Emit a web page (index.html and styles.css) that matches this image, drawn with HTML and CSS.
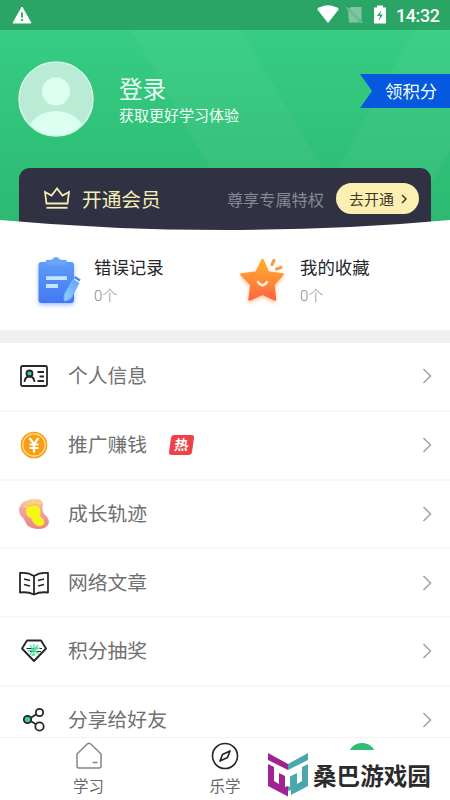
FILE: index.html
```html
<!DOCTYPE html>
<html lang="zh-CN">
<head>
<meta charset="utf-8">
<title>我的</title>
<link rel="stylesheet" href="styles.css">
</head>
<body>
<div class="screen">
  <header class="hero">
    <svg class="hero-bg" width="450" height="231" viewBox="0 0 450 231">
      <defs>
        <linearGradient id="hg" x1="0" y1="0" x2="0" y2="1"><stop offset="0" stop-color="#37d086"/><stop offset="1" stop-color="#2db870"/></linearGradient>
      </defs>
      <rect width="450" height="231" fill="url(#hg)"/>
      <path d="M131 30H241L328 178L340 165L414 30H450V150L425 195H226Z" fill="#fff" fill-opacity=".04"/>
    </svg>
    <div class="status">
      <svg width="20" height="18" viewBox="0 0 20 18"><path d="M10 1L19 17H1Z" fill="#fff" stroke="#fff" stroke-linejoin="round"/><path d="M10 6.5V11.5M10 13V15" stroke="#2ba565" stroke-width="1.9"/></svg>
      <div class="status-right">
        <svg width="70" height="20" viewBox="0 0 70 20">
          <path d="M0 4Q11-3.5 22 4L11 18Z" fill="#fff"/>
          <path d="M34 2H44.5V16L32 3.5ZM31 5L43 17.5H32Z" fill="#80c5a1"/><path d="M29.5 2.500L45 18" stroke="#80c5a1" stroke-width="1.3"/>
          <path d="M57 2.500H60V.5H66V2.500H69V18.500H57Z" fill="#fff"/><path d="M64.500 5L60 11H63L61.500 16L66 9.500H63Z" fill="#2ba565"/>
        </svg>
        <span class="clock">14:32</span>
      </div>
    </div>
    <div class="profile">
      <svg class="avatar" width="76" height="76" viewBox="0 0 76 76">
        <defs><clipPath id="av"><circle cx="38" cy="38" r="37"/></clipPath></defs>
        <circle cx="38" cy="38" r="37" fill="#baebd5"/>
        <g clip-path="url(#av)" fill="#dbfff0"><circle cx="38" cy="30.500" r="14"/><ellipse cx="38" cy="72" rx="28" ry="22"/></g>
        <circle cx="38" cy="38" r="37" fill="none" stroke="#d2f8e5" stroke-width="1.500"/>
      </svg>
      <div class="who"><div class="name">登录</div><div class="sub">获取更好学习体验</div></div>
      <div class="flag">领积分</div>
    </div>
    <div class="vip">
      <svg width="26" height="23" viewBox="0 0 26 23" fill="none" stroke="#f5edb3" stroke-width="1.800"><path d="M2.500 16.500L1 5L7.500 8.500L13 1.500L18.500 8.500L25 5L23.500 16.500Z"/><path d="M2.500 20.800H23.500"/></svg>
      <span class="vip-title">开通会员</span>
      <span class="vip-note">尊享专属特权</span>
      <span class="vip-btn">去开通<svg width="6" height="10" viewBox="0 0 6 10" fill="none" stroke="#3c3928" stroke-width="1.500"><path d="M1 1L5 5L1 9"/></svg></span>
    </div>
    <svg class="curve" width="450" height="12" viewBox="0 0 450 12"><path d="M0 1Q110 11 225 11T450 1V12H0Z" fill="#fff"/></svg>
  </header>

  <section class="stats">
    <div class="stat">
      <svg width="54" height="60" viewBox="0 0 54 60">
        <defs><linearGradient id="bl" x1="0" y1="0" x2="0" y2="1"><stop stop-color="#5b9df9"/><stop offset="1" stop-color="#4577f2"/></linearGradient>
        <linearGradient id="pn" x1="1" y1="0" x2="0" y2="1"><stop stop-color="#61a1fb"/><stop offset="1" stop-color="#93cfff"/></linearGradient></defs>
        <g class="blue-shadow"><rect x="8.500" y="12" width="35.500" height="41" rx="3" fill="url(#bl)"/>
        <path d="M16 10H20Q22 10 23 8.500Q26 5.500 29 8.500Q30 10 32 10H36.500V12.500Q36.500 15.500 33.500 15.500H19Q16 15.500 16 12.500Z" fill="#6ba3f7"/></g>
        <path d="M16 28.200H37M16 36H28" stroke="#c4e4ff" stroke-width="3.800"/>
        <path d="M43 29.500L49 33L41.500 47.500Q38 51 34.500 51Q33.500 48 34.500 44Z" fill="url(#pn)" stroke="#70b5fc" stroke-width="1"/><path d="M44.500 27L50 30.500" stroke="#4b88f6" stroke-width="2.600"/>
      </svg>
      <div class="stat-text"><div class="stat-title">错误记录</div><div class="stat-count">0个</div></div>
    </div>
    <div class="stat">
      <svg width="54" height="60" viewBox="0 0 54 60">
        <defs><linearGradient id="or" x1="0" y1="0" x2="0" y2="1"><stop stop-color="#ffb12b"/><stop offset="1" stop-color="#ff6642"/></linearGradient></defs>
        <path class="orange-shadow" d="M26.500 10L32 22.500L46.500 24.500L37.500 34.500L39 49.500L26.500 43.500L13.500 49.500L15.500 34.500L5.500 24.500L20.500 22.500Z" fill="url(#or)" stroke="url(#or)" stroke-width="2.500" stroke-linejoin="round"/>
        <path d="M22 32Q26.500 38.500 31 32" fill="none" stroke="#fff0df" stroke-width="2.400" stroke-linecap="round"/>
        <path d="M36 14.500L38 10.500M40.500 19L45 17.500" stroke="#f89d45" stroke-width="3.200" stroke-linecap="round"/>
      </svg>
      <div class="stat-text"><div class="stat-title">我的收藏</div><div class="stat-count">0个</div></div>
    </div>
  </section>

  <main class="list">
    <div class="row">
      <svg class="icon" width="32" height="32" viewBox="0 0 32 32" fill="none" stroke="#24282b" stroke-width="1.800"><rect x="3" y="6" width="26" height="20" rx="1.500"/><circle cx="11.500" cy="13.500" r="3" fill="#43d186"/><path d="M6.500 22Q7 16.500 11.500 16.500T16.500 22M19.500 12H26M21.500 16.500H26M19.500 21H26"/></svg>
      <span class="label">个人信息</span><svg class="chev" width="10" height="16" viewBox="0 0 10 16"><path d="M1.500 1L8.500 8L1.500 15"/></svg>
    </div>
    <div class="row">
      <svg class="icon" width="32" height="32" viewBox="0 0 32 32" fill="none"><circle cx="16" cy="16" r="13.300" fill="#f99d12"/><circle cx="16" cy="16" r="11.200" stroke="#ffe0a5" stroke-width="1.200"/><path d="M11.500 9L16 15L20.500 9M16 15V23.500M11.500 15.500H20.500M11.500 19H20.500" stroke="#fff" stroke-width="2.200"/></svg>
      <span class="label">推广赚钱</span><span class="hot"><b>热</b></span><svg class="chev" width="10" height="16" viewBox="0 0 10 16"><path d="M1.500 1L8.500 8L1.500 15"/></svg>
    </div>
    <div class="row">
      <svg class="icon" width="32" height="32" viewBox="0 0 32 32"><defs><linearGradient id="ft" x1="0" y1="0" x2="0" y2="1"><stop stop-color="#f8d79c"/><stop offset=".35" stop-color="#f2a5a5"/><stop offset="1" stop-color="#ed8580"/></linearGradient></defs><path d="M6 3.500Q14-.5 22 1.500Q26 4 24.500 9Q24 14 27 17Q32 21 30.500 26Q28 31 21 31Q13 31 9 27Q7 23 5 20Q1 17 1 11Q2 6 6 3.500Z" fill="url(#ft)"/><path d="M8 14Q7 9.500 12 8.500Q20 6 22 10.500Q23 16 22 18Q27 22 26 26Q23 30 18 27Q14 24 13 20Q8 18 8 14Z" fill="#f8f519"/><g fill="#fbe04a"><circle cx="8" cy="8.500" r="1.600"/><circle cx="11.500" cy="5.700" r="1.500"/><circle cx="15" cy="4.400" r="1.300"/><circle cx="18.500" cy="4.200" r="1.300"/><circle cx="21.500" cy="5.500" r="1.300"/></g></svg>
      <span class="label">成长轨迹</span><svg class="chev" width="10" height="16" viewBox="0 0 10 16"><path d="M1.500 1L8.500 8L1.500 15"/></svg>
    </div>
    <div class="row">
      <svg class="icon" width="32" height="32" viewBox="0 0 32 32" fill="none" stroke="#24282b" stroke-width="1.800" stroke-linejoin="round"><path d="M16 9Q10 5 2 6V25.500Q10 24.500 16 27.500Q22 24.500 30 25.500V6Q22 5 16 9V27M6 12L12 13.500M6 17.500L12 19M20 13.500L26 12M20 19L26 17.500"/></svg>
      <span class="label">网络文章</span><svg class="chev" width="10" height="16" viewBox="0 0 10 16"><path d="M1.500 1L8.500 8L1.500 15"/></svg>
    </div>
    <div class="row">
      <svg class="icon" width="32" height="32" viewBox="0 0 32 32" fill="none" stroke="#24282b" stroke-width="1.900" stroke-linejoin="round"><path d="M9 5.500H23L28 13.500L16 26L4 13.500Z"/><path d="M8.500 13.500H24M12 16.500H23" stroke-width="1"/><path d="M12 10L15 15L12 20M16 9V21M19 11L16 15L21 19M10 16L22 13M14 21L20 10" stroke="#4ce69a" stroke-width="1.300"/></svg>
      <span class="label">积分抽奖</span><svg class="chev" width="10" height="16" viewBox="0 0 10 16"><path d="M1.500 1L8.500 8L1.500 15"/></svg>
    </div>
    <div class="row">
      <svg class="icon" width="32" height="32" viewBox="0 0 32 32" fill="none" stroke="#24282b" stroke-width="1.800"><path d="M12.500 14L18 10.500M12.500 17L18.500 20.500"/><circle cx="21.500" cy="8.500" r="3.700"/><circle cx="9.500" cy="15.500" r="3.700" fill="#43d186"/><circle cx="21.500" cy="22.500" r="4.200"/></svg>
      <span class="label">分享给好友</span><svg class="chev" width="10" height="16" viewBox="0 0 10 16"><path d="M1.500 1L8.500 8L1.500 15"/></svg>
    </div>
  </main>

  <nav class="tabs">
    <div class="tab home"><svg width="28" height="28" viewBox="0 0 28 28" fill="none" stroke="#858585" stroke-width="1.500" stroke-linejoin="round"><path d="M2 12L12.500 1.800Q14 .8 15.500 1.800L26 12V24Q26 26 24 26H4Q2 26 2 24ZM17.500 20.500H22.500"/></svg><span>学习</span></div>
    <div class="tab"><svg width="28" height="28" viewBox="0 0 28 28" fill="none" stroke="#24282b" stroke-width="1.700" stroke-linejoin="round"><circle cx="14" cy="14" r="12.500"/><path d="M19 9L16.500 15.500L9 19L11.500 12.500Z"/></svg><span>乐学</span></div>
    <div class="tab mine"><i></i></div>
  </nav>
  <div class="brand">
    <svg width="40" height="44" viewBox="0 0 40 44"><g fill="#a02293"><path d="M0 0L20 11V17L0 7Z"/><path d="M0 11L6 14V28L11 31V20L17 23V34L20 33V43.500L0 33Z"/></g><g fill="#49a7ad"><path d="M40 0L20 11V17L40 7Z"/><path d="M40 11L34 14V28L29 31V20L22 23.500V34L20 33V38L23 37V42L40 33Z"/></g></svg>
    <span>桑巴游戏园</span>
  </div>
</div>
</body>
</html>
```
FILE: styles.css
```css
* { box-sizing: border-box; }
body { margin: 0; font-family: "Noto Sans CJK SC", sans-serif; }
.screen { position: relative; width: 450px; height: 800px; overflow: hidden; background: #fff; display: flex; flex-direction: column; }
svg { display: block; flex: none; }

.hero { position: relative; height: 231px; flex: none; isolation: isolate; }
.hero-bg { position: absolute; inset: 0; z-index: -1; }
.status { height: 30px; background: #2ba565; display: flex; align-items: center; justify-content: space-between; padding: 0 10px 0 12px; }
.status > svg { margin-top: -1px; }
.status-right { display: flex; align-items: center; gap: 9px; }
.clock { font: 500 17.800px/30px Roboto, sans-serif; color: #fff; width: 44px; white-space: nowrap; letter-spacing: -.3px; padding-top: 1px; }

.profile { height: 138px; display: flex; align-items: flex-start; padding: 31px 0 0 18px; color: #effff6; }
.who { margin: 10px 0 0 25px; white-space: nowrap; }
.name { font-size: 23.500px; line-height: 34px; }
.sub { font-size: 15px; line-height: 20px; }
.flag { width: 90px; height: 34px; margin: 13px 0 0 auto; padding-left: 25px; background: #0659df; clip-path: polygon(0 0, 100% 0, 100% 100%, 0 100%, 12px 50%); font-size: 17.400px; line-height: 34px; white-space: nowrap; }

.vip { height: 63px; margin: 0 19px; padding: 0 12px 2px 25px; background: #303143; border-radius: 11px 11px 0 0; display: flex; align-items: center; }
.vip > svg { margin-top: -1px; }
.vip-title { margin-left: 12px; font-size: 19.700px; line-height: 28px; color: #f5edb3; }
.vip-note { margin: 0 12px 0 auto; font-size: 16.200px; color: #878894; }
.vip-btn { display: flex; align-items: center; gap: 7px; width: 83px; height: 31px; padding-left: 13px; border-radius: 16px; background: #fbf0b2; color: #3c3928; font-size: 15px; white-space: nowrap; }
.curve { position: absolute; left: 0; bottom: 0; }

.stats { height: 112px; flex: none; display: grid; grid-template-columns: 206px 1fr; padding: 19px 0 0 30px; border-bottom: 13px solid #eef0f4; }
.stat { display: flex; gap: 10px; }
.stat-title { margin-top: 4px; font-size: 17.400px; line-height: 26px; color: #24262b; }
.stat-count { font: 300 15px/24px Roboto, "Noto Sans CJK SC", sans-serif; color: #888; margin-top: 4px; }
.blue-shadow { filter: drop-shadow(0 2px 2px #9fbfff); }
.orange-shadow { filter: drop-shadow(0 2px 2px #ffc3a6); }

.list { height: 394px; flex: none; overflow: hidden; }
.row { height: 68.750px; border-bottom: 2px solid #f7f7f7; display: flex; align-items: center; padding: 0 18px; }
.label { margin-left: 18px; font-size: 19.800px; line-height: 30px; color: #707070; margin-top: -2px; }
.chev { margin-left: auto; fill: none; stroke: #a4a4a4; stroke-width: 1.600; }
.hot { width: 23px; height: 20px; margin-left: 23px; border-radius: 3px; background: #ee4248; transform: skewX(-8deg); color: #fff; font-size: 14px; line-height: 19px; text-align: center; }

.tabs { height: 63px; flex: none; border-top: 1px solid #f4f4f4; background: #fff; display: grid; grid-template-columns: 177px 96px 177px; }
.tab { display: flex; flex-direction: column; align-items: center; padding-top: 4px; font-size: 15.500px; line-height: 22px; gap: 4px; color: #686868; }
.mine { padding-top: 5px; }
.mine i { width: 28px; height: 28px; border-radius: 50%; background: #2dbd75; }
.brand { position: absolute; left: 262px; right: 0; bottom: 0; height: 50px; background: #fff; display: flex; align-items: center; padding: 0 0 1px 6px; font-size: 23.600px; font-weight: 700; color: #2b2b2d; white-space: nowrap; }
.brand span { margin-left: 5px; line-height: 30px; }
```
